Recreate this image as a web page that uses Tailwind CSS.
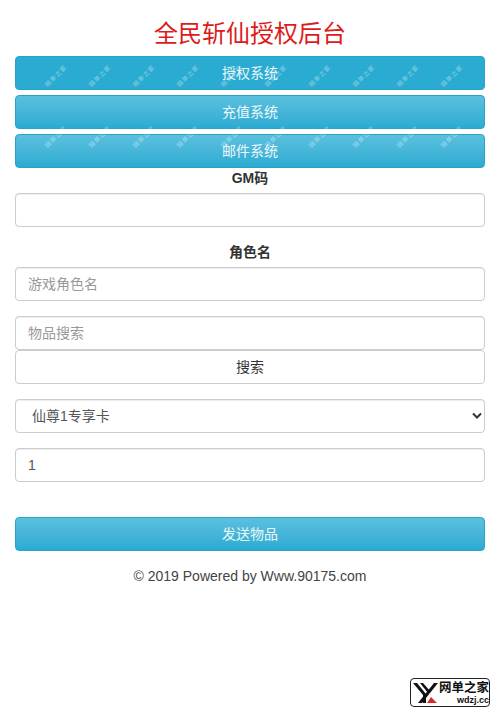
<!DOCTYPE html>
<html lang="en">
<head>
<meta charset="UTF-8">
<title>全民斩仙授权后台</title>
<script src="https://cdn.jsdelivr.net/npm/@tailwindcss/browser@4"></script>
</head>
<body class="bg-white font-['Liberation_Sans','Noto_Sans_CJK_SC',sans-serif] text-[14px] text-[#333] overflow-hidden">
<div class="relative h-[717px] px-[15px] pt-[18px]">
  <h1 class="h-[38px] text-center text-[24px] leading-[32px] text-[#dc1c1c]">全民斩仙授权后台</h1>
  <div class="flex flex-col gap-[5px]">
    <button class="h-[34px] rounded border border-[#28a4c9] bg-[#2aabd2] text-white/90">授权系统</button>
    <button class="h-[34px] rounded border border-[#28a4c9] bg-gradient-to-b from-[#5bc0de] to-[#2aabd2] text-white/90">充值系统</button>
    <button class="h-[34px] rounded border border-[#28a4c9] bg-gradient-to-b from-[#5bc0de] to-[#2aabd2] text-white/90">邮件系统</button>
  </div>
  <label class="block h-[25px] text-center font-bold leading-[20px]">GM码</label>
  <input class="block h-[34px] w-full rounded border border-[#ccc] px-3 shadow-[inset_0_1px_1px_rgba(0,0,0,0.075)]">
  <label class="mt-[15px] block h-[25px] text-center font-bold leading-[20px]">角色名</label>
  <input class="block h-[34px] w-full rounded border border-[#ccc] px-3 shadow-[inset_0_1px_1px_rgba(0,0,0,0.075)] placeholder:text-[#999]" placeholder="游戏角色名">
  <input class="mt-[15px] block h-[34px] w-full rounded border border-[#ccc] px-3 shadow-[inset_0_1px_1px_rgba(0,0,0,0.075)] placeholder:text-[#999]" placeholder="物品搜索">
  <button class="block h-[34px] w-full rounded border border-[#ccc] bg-white text-[#333]">搜索</button>
  <div class="relative mt-[15px]">
    <select class="block h-[34px] w-full appearance-none rounded border border-[#ccc] bg-white pl-4 text-[#555] shadow-[inset_0_1px_1px_rgba(0,0,0,0.075)]">
      <option>仙尊1专享卡</option>
    </select>
    <svg class="pointer-events-none absolute right-[3px] top-[13px] h-2 w-[10px]" viewBox="0 0 10 8" fill="none" stroke="#333" stroke-width="2"><path d="M1 1.5l4 4 4-4"/></svg>
  </div>
  <input class="mt-[15px] block h-[34px] w-full rounded border border-[#ccc] px-3 text-[#555] shadow-[inset_0_1px_1px_rgba(0,0,0,0.075)]" value="1">
  <button class="mt-[35px] block h-[34px] w-full rounded border border-[#28a4c9] bg-gradient-to-b from-[#5bc0de] to-[#2aabd2] text-white/90">发送物品</button>
  <p class="mt-[15px] text-center leading-[20px] text-[#444]">© 2019 Powered by Www.90175.com</p>

  <!-- watermark over the buttons -->
  <div class="pointer-events-none absolute left-[34px] top-[68px] flex flex-col gap-[45px] text-[6px] font-bold leading-[16px] text-white/35">
    <div class="flex">
      <span class="w-[44px] -rotate-45 text-center tracking-[1px]">网单之家</span><span class="w-[44px] -rotate-45 text-center tracking-[1px]">网单之家</span><span class="w-[44px] -rotate-45 text-center tracking-[1px]">网单之家</span><span class="w-[44px] -rotate-45 text-center tracking-[1px]">网单之家</span><span class="w-[44px] -rotate-45 text-center tracking-[1px]">网单之家</span><span class="w-[44px] -rotate-45 text-center tracking-[1px]">网单之家</span><span class="w-[44px] -rotate-45 text-center tracking-[1px]">网单之家</span><span class="w-[44px] -rotate-45 text-center tracking-[1px]">网单之家</span><span class="w-[44px] -rotate-45 text-center tracking-[1px]">网单之家</span><span class="w-[44px] -rotate-45 text-center tracking-[1px]">网单之家</span>
    </div>
    <div class="flex">
      <span class="w-[44px] -rotate-45 text-center tracking-[1px]">网单之家</span><span class="w-[44px] -rotate-45 text-center tracking-[1px]">网单之家</span><span class="w-[44px] -rotate-45 text-center tracking-[1px]">网单之家</span><span class="w-[44px] -rotate-45 text-center tracking-[1px]">网单之家</span><span class="w-[44px] -rotate-45 text-center tracking-[1px]">网单之家</span><span class="w-[44px] -rotate-45 text-center tracking-[1px]">网单之家</span><span class="w-[44px] -rotate-45 text-center tracking-[1px]">网单之家</span><span class="w-[44px] -rotate-45 text-center tracking-[1px]">网单之家</span><span class="w-[44px] -rotate-45 text-center tracking-[1px]">网单之家</span><span class="w-[44px] -rotate-45 text-center tracking-[1px]">网单之家</span>
    </div>
  </div>

  <div class="absolute left-[410px] top-[678px] flex h-[29px] w-[80px] items-center rounded-[4px] border border-[#222] bg-white pl-[1px]">
    <svg class="h-[25px] w-[27px] shrink-0" viewBox="0 0 27 25">
      <path d="M1 3h4l9 11v9h-3v-8z" fill="#111"/>
      <path d="M8 3h3l7 8-2 2z" fill="#111"/>
      <path d="M22 3h4L10 23H6z" fill="#111"/>
      <path d="M15 23l4-6 6 6z" fill="#d92b2b"/>
    </svg>
    <div class="flex flex-col items-end leading-none">
      <span class="text-[12.5px] font-bold leading-[14px] text-[#111]">网单之家</span>
      <span class="text-[9px] font-bold leading-[10px] text-[#111]">wdzj.cc</span>
    </div>
  </div>
</div>
</body>
</html>
